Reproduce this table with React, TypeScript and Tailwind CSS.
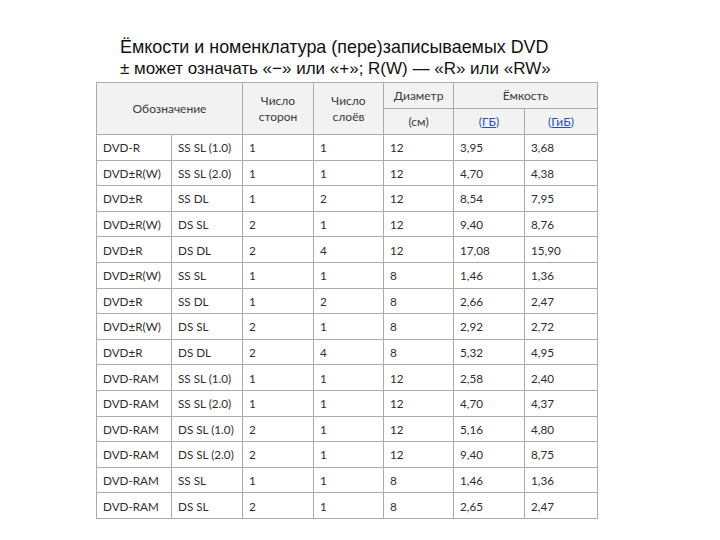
import React from "react";

const rows: string[][] = [
  ["DVD-R", "SS SL (1.0)", "1", "1", "12", "3,95", "3,68"],
  ["DVD±R(W)", "SS SL (2.0)", "1", "1", "12", "4,70", "4,38"],
  ["DVD±R", "SS DL", "1", "2", "12", "8,54", "7,95"],
  ["DVD±R(W)", "DS SL", "2", "1", "12", "9,40", "8,76"],
  ["DVD±R", "DS DL", "2", "4", "12", "17,08", "15,90"],
  ["DVD±R(W)", "SS SL", "1", "1", "8", "1,46", "1,36"],
  ["DVD±R", "SS DL", "1", "2", "8", "2,66", "2,47"],
  ["DVD±R(W)", "DS SL", "2", "1", "8", "2,92", "2,72"],
  ["DVD±R", "DS DL", "2", "4", "8", "5,32", "4,95"],
  ["DVD-RAM", "SS SL (1.0)", "1", "1", "12", "2,58", "2,40"],
  ["DVD-RAM", "SS SL (2.0)", "1", "1", "12", "4,70", "4,37"],
  ["DVD-RAM", "DS SL (1.0)", "2", "1", "12", "5,16", "4,80"],
  ["DVD-RAM", "DS SL (2.0)", "2", "1", "12", "9,40", "8,75"],
  ["DVD-RAM", "SS SL", "1", "1", "8", "1,46", "1,36"],
  ["DVD-RAM", "DS SL", "2", "1", "8", "2,65", "2,47"],
];

const widths = [75, 71, 71, 70, 70, 71, 73];

export default function App() {
  const th =
    "border border-[#ababab] bg-[#f2f2f2] font-normal text-[12px] leading-[16px] text-[#3a3a3a] text-center align-middle p-0";
  return (
    <div className="w-[720px] h-[540px] bg-white relative">
      <div
        className="pt-[37px] pl-[120px] leading-[21px] text-[#111]"
        style={{ fontFamily: '"Liberation Sans", Arial, sans-serif' }}
      >
        <div className="text-[17.9px]">Ёмкости и номенклатура (пере)записываемых DVD</div>
        <div className="text-[17px]">± может означать «−» или «+»; R(W) — «R» или «RW»</div>
      </div>
      <div className="pl-[96px] pt-[3px]">
        <table
          className="border-collapse table-fixed"
          style={{ fontFamily: 'Lato, "Noto Sans", sans-serif', width: 501 }}
        >
          <colgroup>
            {widths.map((w, i) => (
              <col key={i} style={{ width: w }} />
            ))}
          </colgroup>
          <thead>
            <tr className="h-[26px]">
              <th colSpan={2} rowSpan={2} className={th}>
                Обозначение
              </th>
              <th rowSpan={2} className={th}>
                Число
                <br />
                сторон
              </th>
              <th rowSpan={2} className={th}>
                Число
                <br />
                слоёв
              </th>
              <th className={th}>Диаметр</th>
              <th colSpan={2} className={th}>
                Ёмкость
              </th>
            </tr>
            <tr className="h-[26px]">
              <th className={th}>(см)</th>
              <th className={th}>
                <span className="text-[#2a4fb0]">
                  (<span className="underline">ГБ</span>)
                </span>
              </th>
              <th className={th}>
                <span className="text-[#2a4fb0]">
                  (<span className="underline">ГиБ</span>)
                </span>
              </th>
            </tr>
          </thead>
          <tbody>
            {rows.map((r, i) => (
              <tr key={i} className="h-[25.6px]">
                {r.map((c, j) => (
                  <td
                    key={j}
                    className="border border-[#ababab] px-[6px] py-0 text-[11.7px] leading-[16px] text-[#2e2e2e] whitespace-nowrap"
                  >
                    {c}
                  </td>
                ))}
              </tr>
            ))}
          </tbody>
        </table>
      </div>
    </div>
  );
}
